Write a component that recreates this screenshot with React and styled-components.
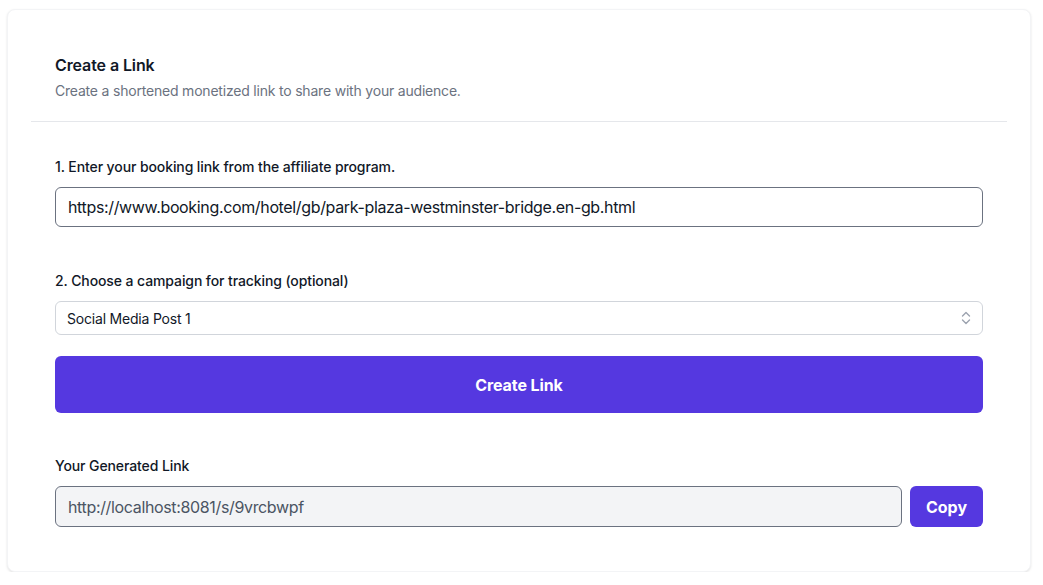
import React, { useState } from 'react'
import styled, { createGlobalStyle } from 'styled-components'

const GlobalStyle = createGlobalStyle`
  body {
    margin: 0;
    background: #ffffff;
    font-family: Inter, "Noto Sans", "Liberation Sans", sans-serif;
    color: #111827;
  }
  * {
    box-sizing: border-box;
  }
`

const Page = styled.main`
  padding: 9px 12px 0 7px;
`

const Card = styled.section`
  background: #ffffff;
  border: 1px solid #f3f4f6;
  border-radius: 8px;
  box-shadow: 0 1px 3px rgba(0, 0, 0, 0.08), 0 1px 2px rgba(0, 0, 0, 0.04);
  padding: 23px;
`

const Header = styled.header`
  padding: 20px 24px;
  border-bottom: 1px solid #e5e7eb;
`

const Title = styled.h2`
  margin: 0;
  font-size: 16px;
  line-height: 24px;
  font-weight: 600;
  color: #111827;
  letter-spacing: -0.1px;
`

const Subtitle = styled.p`
  margin: 4px 0 0;
  font-size: 14px;
  line-height: 20px;
  color: #6b7280;
  letter-spacing: -0.2px;
`

const Body = styled.div`
  padding: 35px 24px 21px;
  display: flex;
  flex-direction: column;
`

const Field = styled.div`
  display: flex;
  flex-direction: column;
  gap: 10px;
  margin-top: ${(p) => p.$gap || 0}px;
`

const Label = styled.label`
  font-size: 14px;
  line-height: 20px;
  font-weight: 500;
  color: #111827;
  letter-spacing: -0.1px;
`

const TextInput = styled.input`
  width: 100%;
  height: ${(p) => (p.readOnly ? 41 : 40)}px;
  padding: 0 12px;
  font: inherit;
  font-size: 16px;
  letter-spacing: -0.35px;
  color: ${(p) => (p.readOnly ? '#4b5563' : '#111827')};
  background: ${(p) => (p.readOnly ? '#f3f4f6' : '#ffffff')};
  border: 1px solid #6b7280;
  border-radius: 6px;
  outline: none;
`

const SelectWrap = styled.div`
  position: relative;
  display: flex;
  align-items: center;
`

const Select = styled.select`
  width: 100%;
  height: 34px;
  padding: 0 36px 0 11px;
  font: inherit;
  font-size: 14px;
  letter-spacing: -0.2px;
  color: #111827;
  background: #ffffff;
  border: 1px solid #d1d5db;
  border-radius: 6px;
  appearance: none;
  outline: none;
`

const Chevrons = styled.svg`
  position: absolute;
  right: 11px;
  pointer-events: none;
`

const PrimaryButton = styled.button`
  margin-top: 21px;
  height: 57px;
  width: 100%;
  border: none;
  border-radius: 6px;
  background: #5538e0;
  color: #ffffff;
  font: inherit;
  font-size: 16px;
  font-weight: 700;
  letter-spacing: -0.1px;
  cursor: pointer;
`

const Row = styled.div`
  display: flex;
  gap: 8px;
`

const CopyButton = styled.button`
  flex: 0 0 73px;
  height: 41px;
  border: none;
  border-radius: 6px;
  background: #5538e0;
  color: #ffffff;
  font: inherit;
  font-size: 16px;
  font-weight: 700;
  cursor: pointer;
`

const App = () => {
  const [url, setUrl] = useState(
    'https://www.booking.com/hotel/gb/park-plaza-westminster-bridge.en-gb.html'
  )
  const [campaign, setCampaign] = useState('social-1')

  return (
    <Page>
      <GlobalStyle />
      <Card>
        <Header>
          <Title>Create a Link</Title>
          <Subtitle>Create a shortened monetized link to share with your audience.</Subtitle>
        </Header>
        <Body>
          <Field>
            <Label htmlFor="booking">1. Enter your booking link from the affiliate program.</Label>
            <TextInput id="booking" value={url} onChange={(e) => setUrl(e.target.value)} />
          </Field>
          <Field $gap={44}>
            <Label htmlFor="campaign">2. Choose a campaign for tracking (optional)</Label>
            <SelectWrap>
              <Select id="campaign" value={campaign} onChange={(e) => setCampaign(e.target.value)}>
                <option value="social-1">Social Media Post 1</option>
                <option value="social-2">Social Media Post 2</option>
                <option value="newsletter">Newsletter</option>
              </Select>
              <Chevrons width="12" height="16" viewBox="0 0 12 16" fill="none">
                <path d="M2.5 6L6 2.5L9.5 6" stroke="#9ca3af" strokeWidth="1.4" strokeLinecap="round" strokeLinejoin="round" />
                <path d="M2.5 10L6 13.5L9.5 10" stroke="#9ca3af" strokeWidth="1.4" strokeLinecap="round" strokeLinejoin="round" />
              </Chevrons>
            </SelectWrap>
          </Field>
          <PrimaryButton>Create Link</PrimaryButton>
          <Field $gap={43}>
            <Label htmlFor="generated">Your Generated Link</Label>
            <Row>
              <TextInput id="generated" readOnly value="http://localhost:8081/s/9vrcbwpf" />
              <CopyButton>Copy</CopyButton>
            </Row>
          </Field>
        </Body>
      </Card>
    </Page>
  )
}

export default App
